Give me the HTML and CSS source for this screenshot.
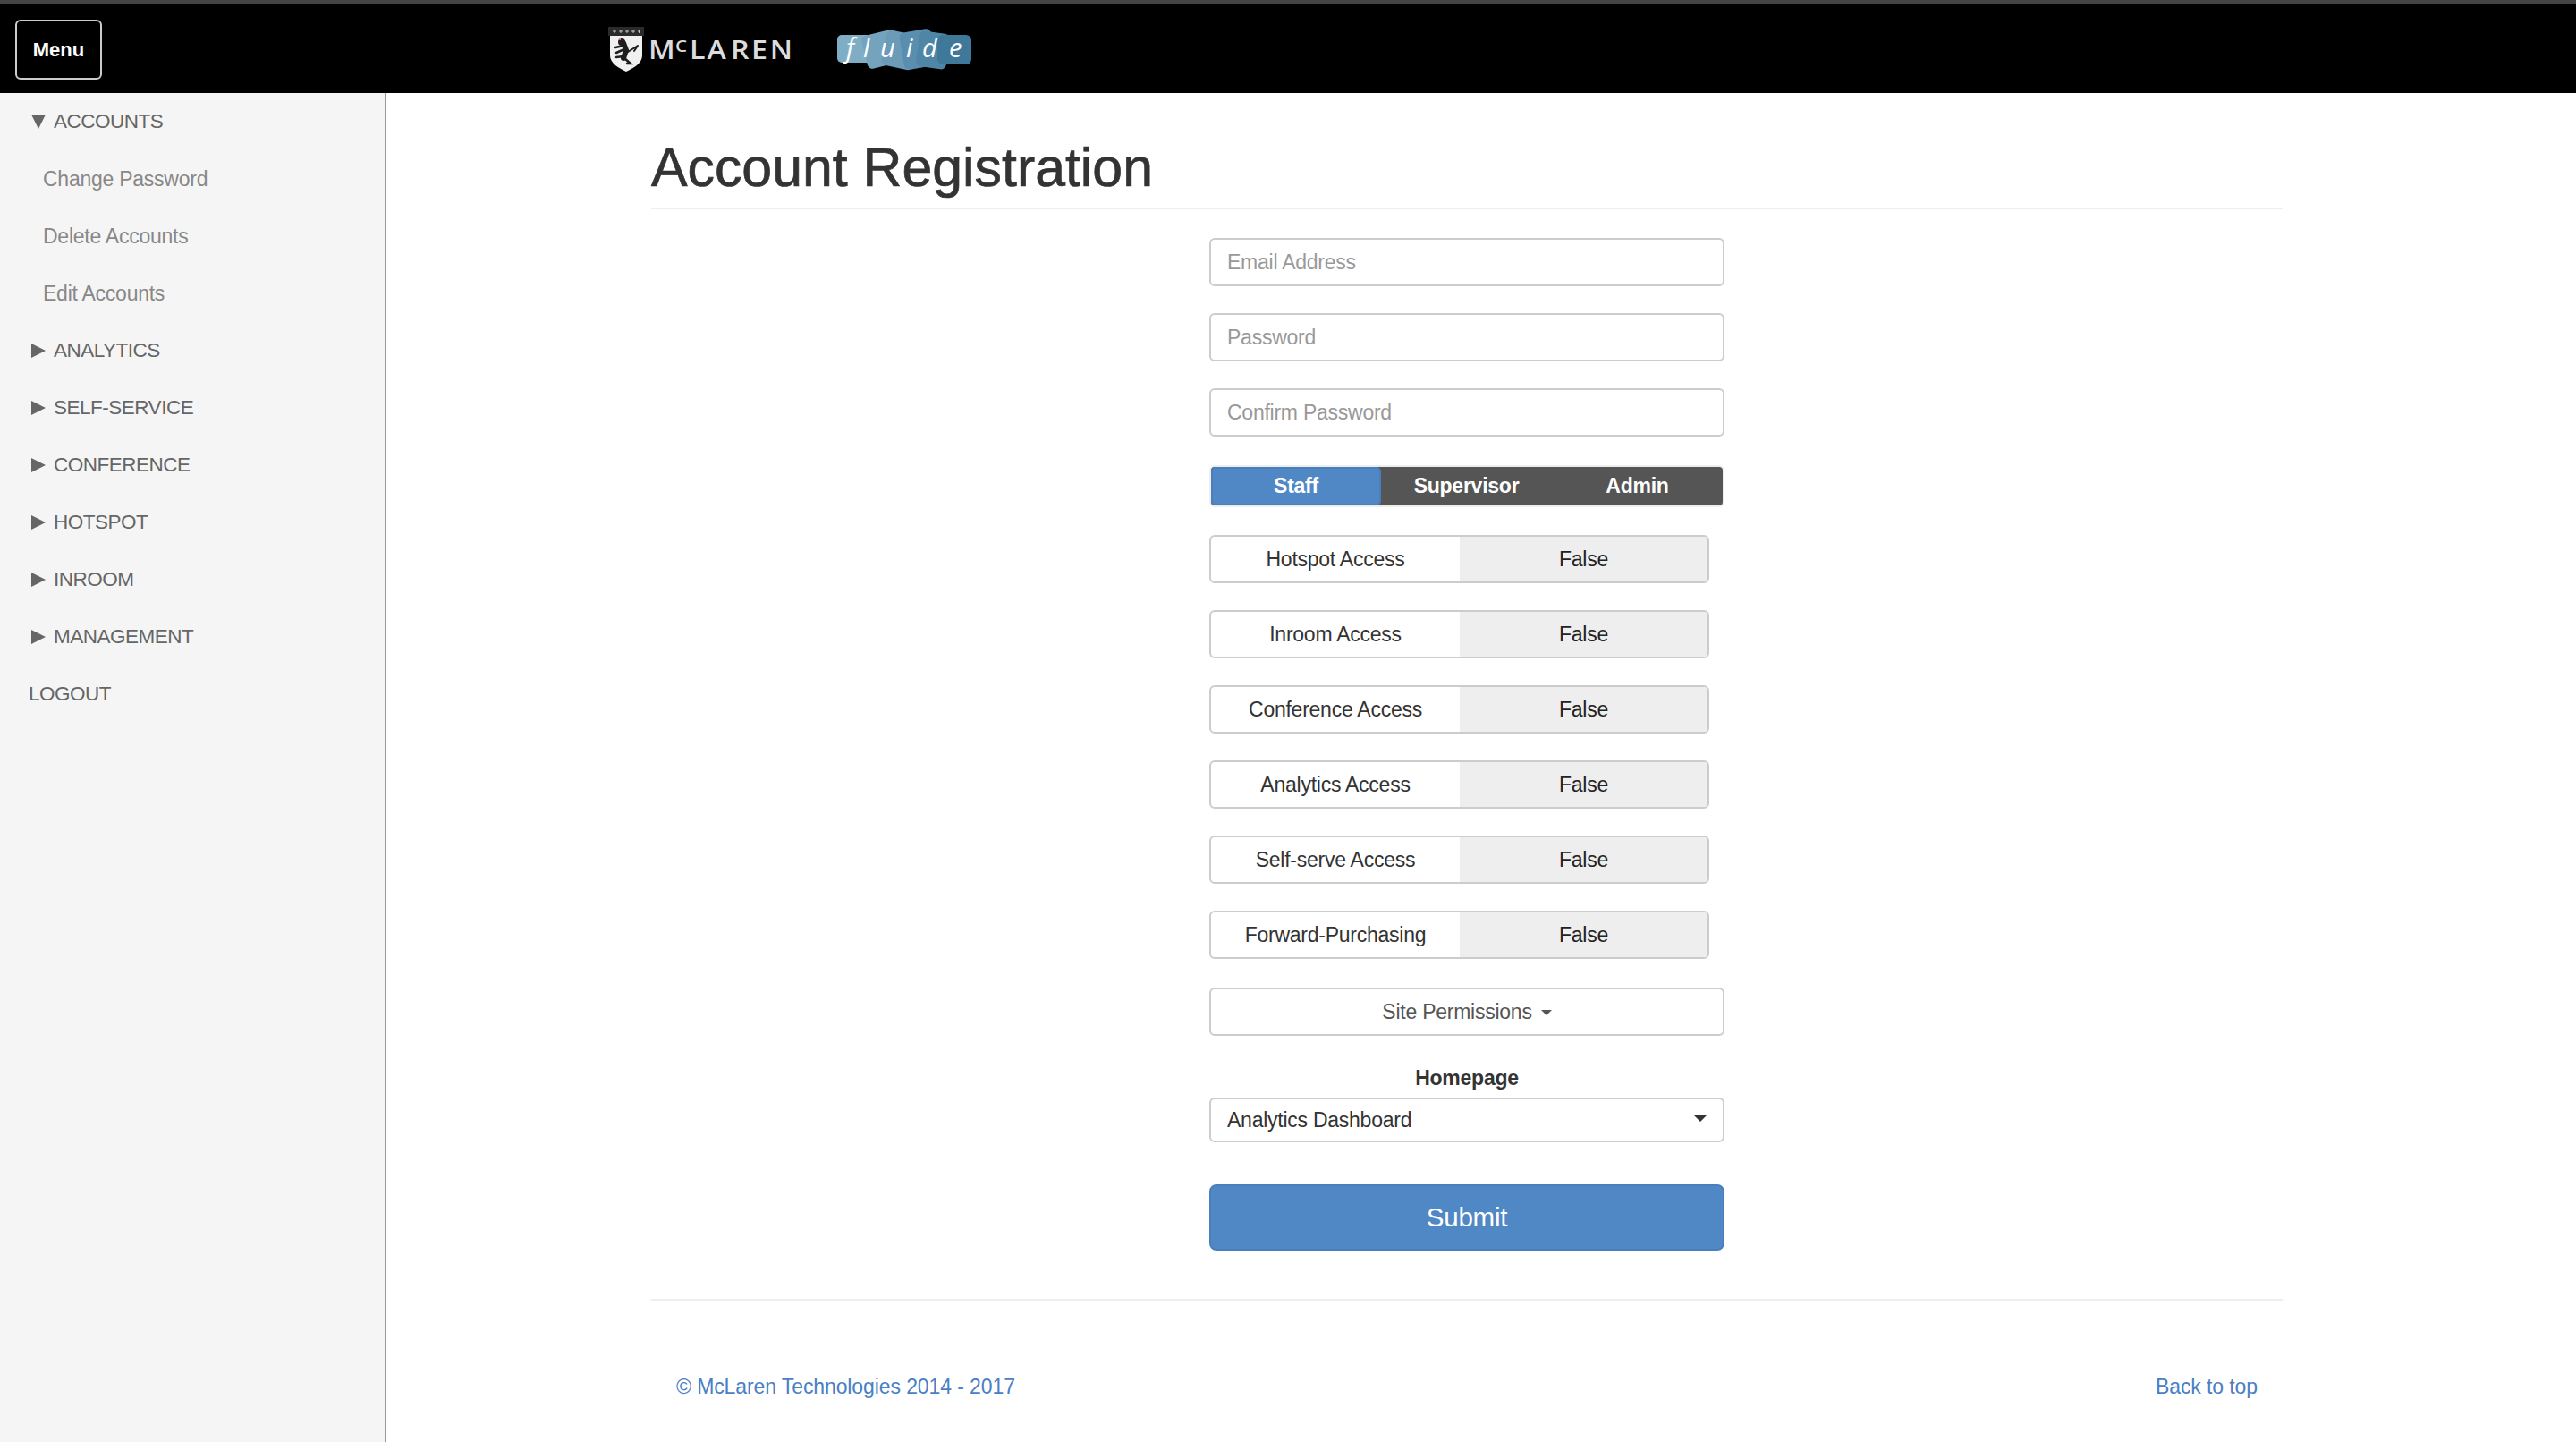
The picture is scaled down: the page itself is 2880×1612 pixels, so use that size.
FILE: index.html
```html
<!DOCTYPE html>
<html lang="en">
<head>
    <meta charset="UTF-8">
    <meta name="viewport" content="width=device-width, initial-scale=1.0">
    <title>Account Registration</title>
    <link rel="stylesheet" href="styles.css">
</head>
<body>
    <header class="topbar">
        <button class="menu-btn" type="button">Menu</button>
        <div class="brand">
            <svg class="logo-shield" viewBox="0 0 40 50" width="40" height="50" aria-hidden="true">
                <rect x="0" y="0" width="40" height="10" fill="#2b2b2b"/>
                <path d="M5 5h4M7 3v4M12 5h4M14 3v4M19 5h4M21 3v4M26 5h4M28 3v4M33 5h3M34.500 3v4" stroke="#ccc" stroke-width="0.9"/>
                <path d="M2 10h36v22c0 9-10 14-18 18C12 46 2 41 2 32z" fill="#f0f0f0"/>
                <g fill="none" stroke="#1e1e1e" stroke-linecap="round">
                    <path d="M17 18L20 26L17 35" stroke-width="6"/>
                    <path d="M17 21L8 23M18 25L9 29" stroke-width="2.500"/>
                    <path d="M22 28L33 21M33 21L29 27" stroke-width="2"/>
                    <path d="M17 33L9 34M18 35L25 41L21 41" stroke-width="2.500"/>
                </g>
                <circle cx="15" cy="17" r="4" fill="#1e1e1e"/>
                <circle cx="13" cy="14" r="1.100" fill="#e88"/>
            </svg>
            <svg class="logo-word" viewBox="0 0 170 24" width="170" height="24" role="img" aria-label="McLaren">
                <g transform="scale(1.15 1)" class="word-text">
                    <text x="0" y="23">M</text>
                    <text x="26" y="15" class="word-small">C</text>
                    <text y="23"><tspan x="40">L</tspan><tspan x="57">A</tspan><tspan x="80">R</tspan><tspan x="100">E</tspan><tspan x="118">N</tspan></text>
                </g>
            </svg>
            <svg class="logo-fluide" viewBox="0 0 150 52" width="150" height="52" role="img" aria-label="fluide">
                <rect x="0" y="9" width="62" height="31" rx="5" fill="#7fadc4"/>
                <rect x="30" y="6" width="38" height="38" rx="6" transform="rotate(-14 49 25)" fill="#74a3bd"/>
                <rect x="52" y="6" width="36" height="40" rx="6" transform="rotate(12 70 26)" fill="#6b9bb7"/>
                <rect x="72" y="4" width="36" height="42" rx="6" transform="rotate(-10 90 25)" fill="#5a8eae"/>
                <rect x="90" y="6" width="34" height="40" rx="6" transform="rotate(8 107 26)" fill="#4f86a6"/>
                <rect x="112" y="9" width="38" height="33" rx="6" fill="#3f7899"/>
                <text class="fluide-text" y="34"><tspan x="10">f</tspan><tspan x="29">l</tspan><tspan x="48">u</tspan><tspan x="77">i</tspan><tspan x="95">d</tspan><tspan x="125">e</tspan></text>
            </svg>
        </div>
    </header>

    <div class="layout">
        <aside class="sidebar">
            <a class="nav-head"><i class="tri tri-down"></i>ACCOUNTS</a>
            <a class="nav-sub">Change Password</a>
            <a class="nav-sub">Delete Accounts</a>
            <a class="nav-sub">Edit Accounts</a>
            <a class="nav-head"><i class="tri tri-right"></i>ANALYTICS</a>
            <a class="nav-head"><i class="tri tri-right"></i>SELF-SERVICE</a>
            <a class="nav-head"><i class="tri tri-right"></i>CONFERENCE</a>
            <a class="nav-head"><i class="tri tri-right"></i>HOTSPOT</a>
            <a class="nav-head"><i class="tri tri-right"></i>INROOM</a>
            <a class="nav-head"><i class="tri tri-right"></i>MANAGEMENT</a>
            <a class="nav-head nav-plain">LOGOUT</a>
        </aside>

        <main class="content">
            <h1 class="page-title">Account Registration</h1>

            <form class="reg-form">
                <input class="text-field" type="email" placeholder="Email Address">
                <input class="text-field" type="password" placeholder="Password">
                <input class="text-field" type="password" placeholder="Confirm Password">

                <div class="segments">
                    <button class="segment active" type="button">Staff</button>
                    <button class="segment" type="button">Supervisor</button>
                    <button class="segment" type="button">Admin</button>
                </div>

                <div class="toggle"><span class="toggle-label">Hotspot Access</span><span class="toggle-value">False</span></div>
                <div class="toggle"><span class="toggle-label">Inroom Access</span><span class="toggle-value">False</span></div>
                <div class="toggle"><span class="toggle-label">Conference Access</span><span class="toggle-value">False</span></div>
                <div class="toggle"><span class="toggle-label">Analytics Access</span><span class="toggle-value">False</span></div>
                <div class="toggle"><span class="toggle-label">Self-serve Access</span><span class="toggle-value">False</span></div>
                <div class="toggle"><span class="toggle-label">Forward-Purchasing</span><span class="toggle-value">False</span></div>

                <button class="perm-btn" type="button">Site Permissions<i class="caret"></i></button>

                <label class="home-label">Homepage</label>
                <div class="select-wrap">
                    <select class="home-select">
                        <option>Analytics Dashboard</option>
                    </select>
                </div>

                <button class="submit-btn" type="button">Submit</button>
            </form>

            <footer class="page-foot">
                <a>© McLaren Technologies 2014 - 2017</a>
                <a>Back to top</a>
            </footer>
        </main>
    </div>
</body>
</html>
```

FILE: styles.css
```css
* { box-sizing: border-box; }
html, body { height: 100%; }
body { margin: 0; font-family: "Liberation Sans", Arial, sans-serif; font-size: 23px; letter-spacing: -0.25px; color: #333; background: #fff; display: flex; flex-direction: column; }
button, input, select { font-family: inherit; font-size: 23px; letter-spacing: -0.25px; }

.topbar { height: 104px; flex: none; background: #000; border-top: 5px solid #444; display: flex; align-items: center; padding-left: 17px; }
.menu-btn { width: 97px; height: 67px; margin-top: 1px; padding: 2px 0 0 0; background: #000; color: #fff; border: 2px solid #ccc; border-radius: 6px; font-size: 22px; font-weight: bold; letter-spacing: 0; }
.brand { display: flex; align-items: center; margin-left: 566px; }
.logo-shield { display: block; margin-top: 1px; }
.logo-word { display: block; margin-left: 5px; overflow: visible; }
.logo-fluide { display: block; margin-left: 41px; margin-top: 2px; }
.word-text { font-family: "Open Sans", sans-serif; font-size: 28px; font-weight: 600; fill: #dcdcdc; letter-spacing: 0; }
.word-small { font-size: 18px; }
.fluide-text { font-family: "Open Sans", sans-serif; font-size: 29px; font-style: italic; fill: #fff; letter-spacing: 0; }

.layout { flex: 1; display: flex; }
.sidebar { width: 432px; flex: none; background: #f5f5f5; border-right: 2px solid #999; display: flex; flex-direction: column; }
.nav-head { height: 64px; display: flex; align-items: center; padding-left: 35px; color: #666; font-size: 22.5px; letter-spacing: -0.5px; }
.nav-sub { height: 64px; display: flex; align-items: center; padding-left: 48px; color: #888; }
.nav-plain { padding-left: 32px; }
.tri { display: block; margin-right: 9px; width: 0; height: 0; }
.tri-down { border-left: 8px solid transparent; border-right: 8px solid transparent; border-top: 16px solid #666; }
.tri-right { border-top: 8px solid transparent; border-bottom: 8px solid transparent; border-left: 16px solid #666; }

.content { flex: 1; padding: 0 328px 0 296px; }
.page-title { margin: 0; height: 130px; padding-top: 50px; font-size: 60.8px; font-weight: 400; letter-spacing: 0; line-height: 66px; color: #333; border-bottom: 2px solid #eee; -webkit-text-stroke: 0.7px #333; }

.reg-form { width: 576px; margin: 32px auto 0; display: flex; flex-direction: column; }
.text-field { height: 54px; margin-bottom: 30px; padding: 0 18px; border: 2px solid #ccc; border-radius: 6px; color: #555; background: #fff; }
.text-field::placeholder { color: #999; opacity: 1; }

.segments { height: 47px; margin-top: 2px; margin-bottom: 31px; display: flex; background: #555; border: 2px solid #eee; border-radius: 6px; }
.segment { flex: 1; padding: 0; background: none; border: none; color: #fff; font-weight: bold; }
.segment.active { flex: none; width: 190px; background: #5088c5; border: 2px solid #4a7fbc; border-radius: 5px; }

.toggle { width: 559px; height: 54px; margin-bottom: 30px; display: flex; border: 2px solid #ccc; border-radius: 6px; overflow: hidden; }
.toggle-label { width: 278px; display: flex; align-items: center; justify-content: center; color: #333; }
.toggle-value { flex: 1; display: flex; align-items: center; justify-content: center; background: #eee; color: #222; }

.perm-btn { height: 54px; margin-top: 2px; padding: 0; background: #fff; border: 2px solid #ccc; border-radius: 6px; color: #555; }
.caret { display: inline-block; margin-left: 10px; vertical-align: middle; border-left: 6px solid transparent; border-right: 6px solid transparent; border-top: 6px solid #555; }

.home-label { margin-top: 32px; height: 37px; line-height: 30px; text-align: center; font-weight: bold; color: #333; }
.select-wrap { position: relative; height: 50px; }
.select-wrap::after { content: ""; position: absolute; right: 20px; top: 20px; border-left: 7px solid transparent; border-right: 7px solid transparent; border-top: 7px solid #333; }
.home-select { width: 100%; height: 50px; padding: 0 18px; appearance: none; background: #fff; border: 2px solid #ccc; border-radius: 6px; color: #333; }

.submit-btn { height: 74px; margin-top: 47px; padding: 0; background: #5088c5; border: 2px solid #4a7fbc; border-radius: 8px; color: #fff; font-size: 29.5px; }

.page-foot { margin-top: 54px; padding: 81px 28px 0; border-top: 2px solid #eee; display: flex; justify-content: space-between; color: #4a80c4; line-height: 30px; letter-spacing: -0.1px; }
```
